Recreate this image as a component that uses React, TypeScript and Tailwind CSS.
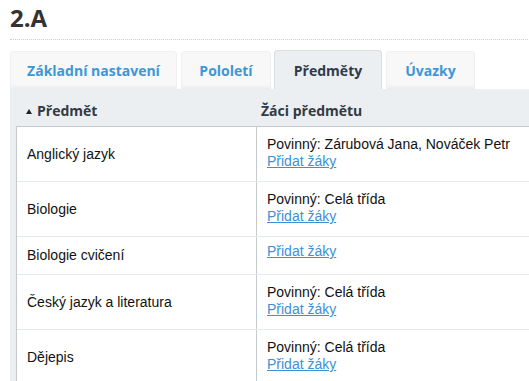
import React from "react";

const rows: { name: string; students?: string }[] = [
  { name: "Anglický jazyk", students: "Povinný: Zárubová Jana, Nováček Petr" },
  { name: "Biologie", students: "Povinný: Celá třída" },
  { name: "Biologie cvičení" },
  { name: "Český jazyk a literatura", students: "Povinný: Celá třída" },
  { name: "Dějepis", students: "Povinný: Celá třída" },
];

const tabs = [
  { label: "Základní nastavení", w: "w-[167px] mr-[4px]", active: false },
  { label: "Pololetí", w: "w-[90px] mr-[3px]", active: false },
  { label: "Předměty", w: "w-[108px] mr-[4px]", active: true },
  { label: "Úvazky", w: "w-[89px]", active: false },
];

export default function App() {
  return (
    <div className="w-[529px] h-[381px] overflow-hidden bg-white">
      <div className="w-[620px] pl-[10px]">
        <div className="border-b border-dotted border-[#cfcfcf] pb-[5px] pt-[2px]">
          <h1 className="text-[24px] leading-[32px] font-bold text-[#333] font-['Open_Sans',sans-serif]">
            2.A
          </h1>
        </div>
        <div className="mt-[10px] flex items-end font-['Open_Sans',sans-serif] text-[14px] font-bold">
          {tabs.map((t) =>
            t.active ? (
              <div
                key={t.label}
                className={`${t.w} h-[39px] flex items-center justify-center rounded-t-[4px] border border-b-0 border-[#dadee0] bg-[#eceff1] text-[#2f3b4b]`}
              >
                {t.label}
              </div>
            ) : (
              <div
                key={t.label}
                className={`${t.w} h-[38px] flex items-center justify-center rounded-t-[4px] border border-b-0 border-[#f0f0f0] bg-[#f8f8f8] text-[#3d97d6] shadow-[inset_0_-4px_4px_-3px_rgba(0,0,0,0.08)]`}
              >
                {t.label}
              </div>
            )
          )}
        </div>
        <div className="bg-[#eceff1] pl-[6px]">
          <div className="flex border-b border-[#c6cacd] pt-[12px] pb-[5px] font-['Open_Sans',sans-serif] text-[14px] leading-[20px] font-bold text-[#333a44]">
            <div className="w-[240px] flex items-center pl-[10px]">
              <svg width="6" height="5" viewBox="0 0 6 5" className="mr-[5px] mt-[1px]">
                <polygon points="3,0 6,5 0,5" fill="#222" />
              </svg>
              Předmět
            </div>
            <div className="pl-[5px]">Žáci předmětu</div>
          </div>
          <div className="bg-white border-l border-[#c6cacd] font-['Liberation_Sans',Arial,sans-serif] text-[14px] leading-[17px] text-[#111]">
            {rows.map((r) => (
              <div key={r.name} className="flex border-b border-[#e6e9eb]">
                <div className="w-[239px] flex items-center pl-[10px]">{r.name}</div>
                <div
                  className={
                    r.students
                      ? "flex-1 border-l border-[#c6cacd] pl-[10px] pt-[9px] pb-[11px]"
                      : "flex-1 border-l border-[#c6cacd] pl-[10px] pt-[6px] pb-[14px]"
                  }
                >
                  {r.students && <div>{r.students}</div>}
                  <div>
                    <a href="#" className="text-[#3d8fd6] underline">
                      Přidat žáky
                    </a>
                  </div>
                </div>
              </div>
            ))}
          </div>
        </div>
      </div>
    </div>
  );
}
